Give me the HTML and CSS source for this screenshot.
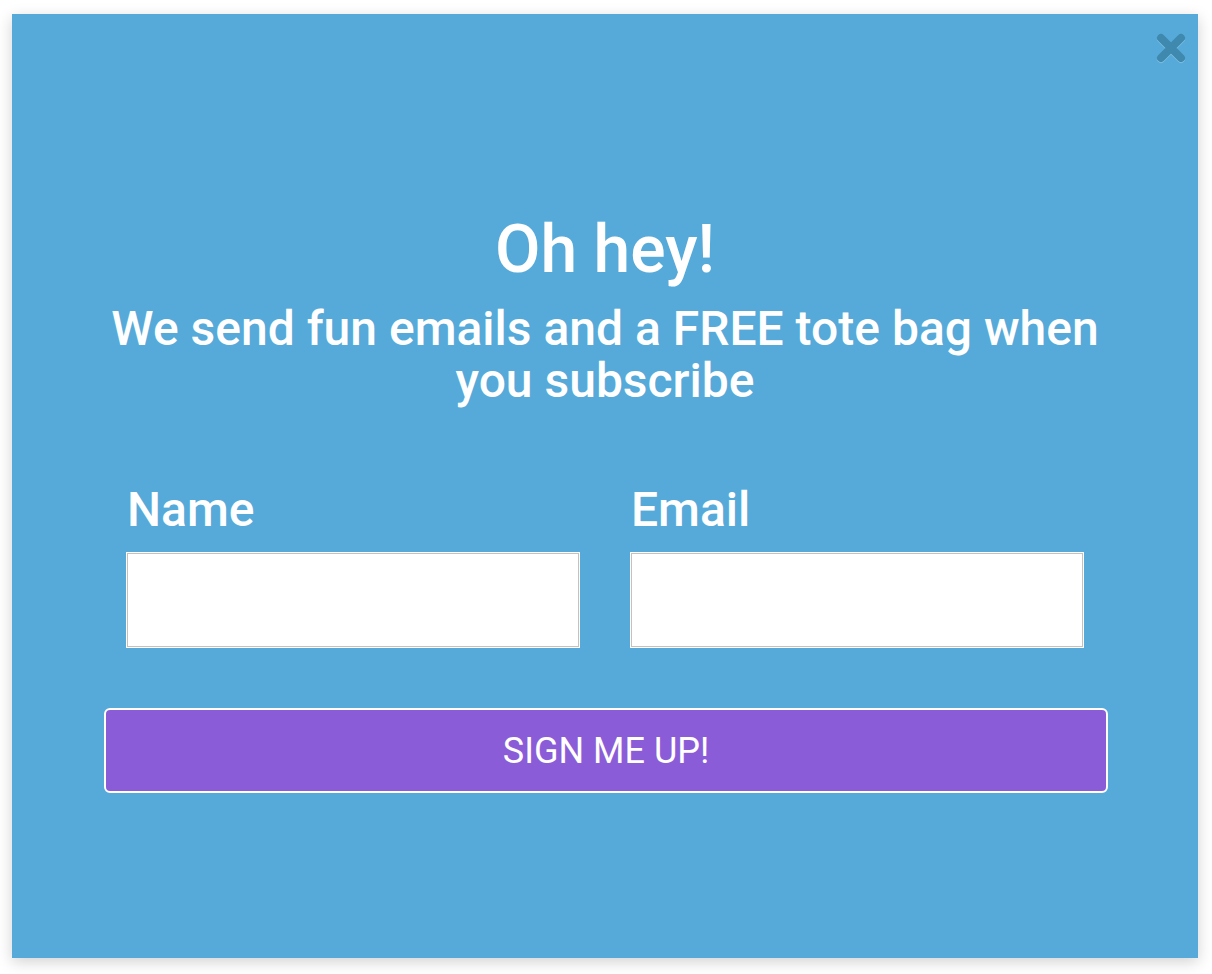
FILE: index.html
```html
<!DOCTYPE html>
<html>
<head>
    <title>Oh hey!</title>
    <link rel="stylesheet" href="styles.css">
</head>
<body>
    <div class="popup">
        <button class="close-btn" aria-label="Close">
            <svg width="30" height="30" viewBox="0 0 30 30">
                <path d="M5 5 L25 25 M25 5 L5 25" stroke="#3f88ae" stroke-width="8" stroke-linecap="round" fill="none"/>
            </svg>
        </button>

        <h1 class="title">Oh hey!</h1>
        <h2 class="subtitle">We send fun emails and a FREE tote bag when you subscribe</h2>

        <form class="signup" onsubmit="return false;">
            <div class="fields">
                <div class="field">
                    <label for="name">Name</label>
                    <input type="text" id="name" name="name">
                </div>
                <div class="field">
                    <label for="email">Email</label>
                    <input type="email" id="email" name="email">
                </div>
            </div>
            <button type="submit" class="submit-btn">SIGN ME UP!</button>
        </form>
    </div>
</body>
</html>
```

FILE: styles.css
```css
body {
    background-color: #ffffff;
    font-family: Roboto, "Liberation Sans", Arial, sans-serif;
    margin: 0;
    padding: 14px 14px 16px 12px;
}

.popup {
    position: relative;
    width: 1186px;
    height: 944px;
    box-sizing: border-box;
    background-color: #55aad9;
    box-shadow: 0 4px 14px rgba(0,0,0,0.18);
    color: white;
    padding-top: 198px;
    display: flex;
    flex-direction: column;
    align-items: center;
}

.close-btn {
    position: absolute;
    top: 19px;
    right: 12px;
    width: 30px;
    height: 30px;
    padding: 0;
    border: none;
    background: none;
    cursor: pointer;
    filter: drop-shadow(0 1px 0 rgba(255,255,255,0.25));
}

.close-btn svg {
    display: block;
}

.title {
    font-size: 66px;
    font-weight: 500;
    line-height: 76px;
    margin: 0;
}

.subtitle {
    font-size: 48px;
    font-weight: 500;
    line-height: 52px;
    margin: 15px 0 0 0;
    max-width: 1000px;
    text-align: center;
}

.signup {
    margin-top: 75px;
    display: flex;
    flex-direction: column;
    align-items: center;
}

.fields {
    display: flex;
    gap: 52px;
}

.field {
    display: flex;
    flex-direction: column;
}

.field label {
    font-size: 48px;
    font-weight: 500;
    line-height: 56px;
    margin-bottom: 15px;
}

.field input {
    width: 452px;
    height: 94px;
    box-sizing: border-box;
    border: 1px solid #c2c2c2;
    outline: 1px solid #ffffff;
    outline-offset: 0;
    background: white;
    margin: 0;
}

.submit-btn {
    margin: 61px 0 0 2px;
    width: 1004px;
    height: 85px;
    background-color: #8b5cd7;
    color: white;
    border: 2px solid white;
    border-radius: 6px;
    font-family: Roboto, "Liberation Sans", Arial, sans-serif;
    font-size: 36px;
    font-weight: 400;
    cursor: pointer;
}
```
